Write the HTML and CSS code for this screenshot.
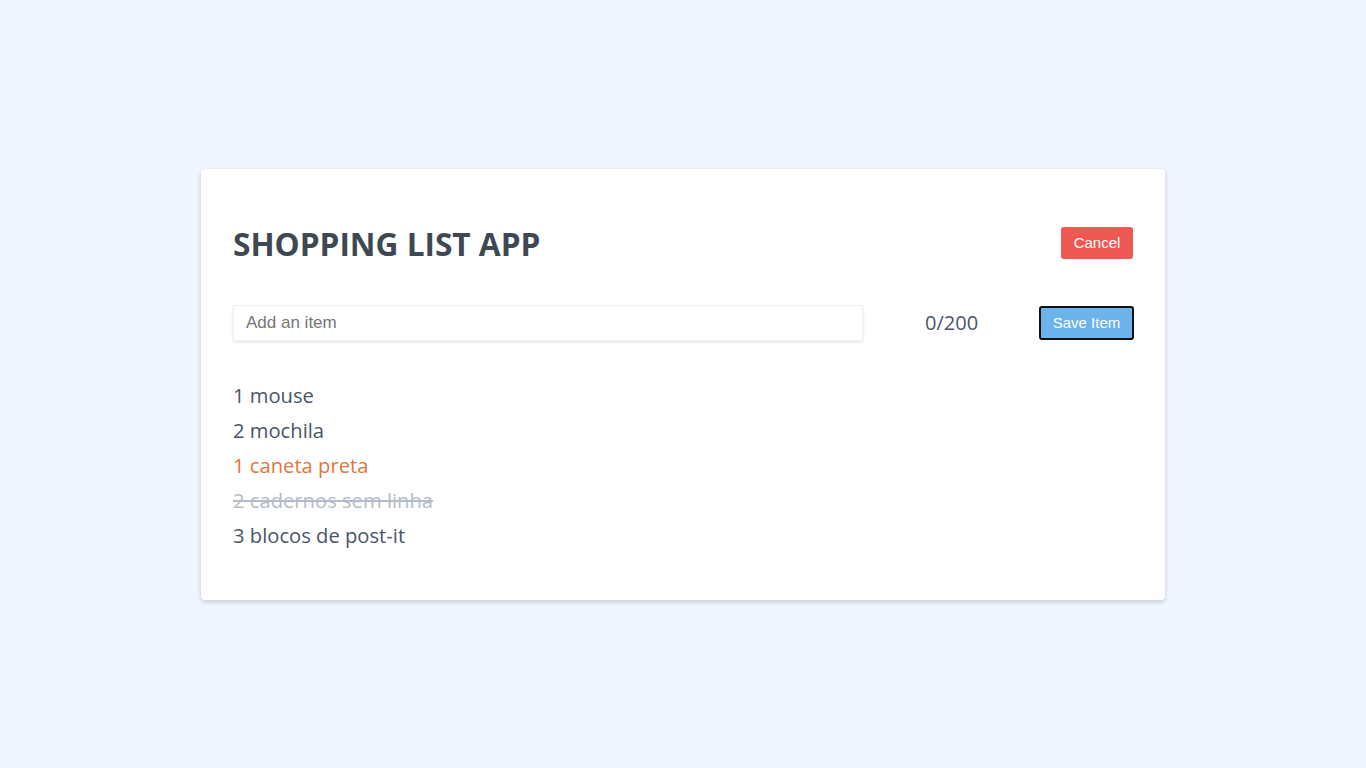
FILE: index.html
```html
<!DOCTYPE html>
<html lang="en">
<head>
<meta charset="utf-8">
<title>Shopping List App</title>
<link rel="stylesheet" href="styles.css">
</head>
<body>
  <main class="card">
    <header class="header">
      <h1 class="title">SHOPPING LIST APP</h1>
      <button class="btn btn-cancel" type="button">Cancel</button>
    </header>
    <form class="add-row">
      <input class="add-input" type="text" placeholder="Add an item">
      <span class="counter">0/200</span>
      <button class="btn btn-save" type="button">Save Item</button>
    </form>
    <ul class="list">
      <li class="item">1 mouse</li>
      <li class="item">2 mochila</li>
      <li class="item item-priority">1 caneta preta</li>
      <li class="item item-done">2 cadernos sem linha</li>
      <li class="item">3 blocos de post-it</li>
    </ul>
  </main>
</body>
</html>
```
FILE: styles.css
```css
* { box-sizing: border-box; }
html, body { margin: 0; padding: 0; }
body {
  min-height: 100vh;
  background: #eff6ff;
  display: flex;
  align-items: center;
  justify-content: center;
  font-family: "Open Sans", "Noto Sans", sans-serif;
  color: #4a5568;
}
.card {
  width: 964px;
  background: #fff;
  border-radius: 4px;
  padding: 32px;
  box-shadow: 0 2px 5px rgba(0, 0, 0, 0.18);
}
.header {
  display: flex;
  align-items: center;
  justify-content: space-between;
  height: 48px;
  margin-top: 19px;
}
.title {
  margin: 0;
  font-size: 31.6px;
  font-weight: 700;
  color: #3d4852;
}
.btn {
  font-family: "Liberation Sans", Arial, sans-serif;
  font-size: 15px;
  color: #fff;
  border: 0;
  border-radius: 3px;
  cursor: pointer;
  padding: 0;
}
.btn-cancel {
  background: #ef5753;
  width: 72px;
  height: 32px;
  margin-bottom: 2px;
}
.add-row {
  display: flex;
  align-items: center;
  margin-top: 37px;
  height: 36px;
}
.add-input {
  width: 630px;
  height: 36px;
  border: 1px solid #f1f1f1;
  border-radius: 2px;
  box-shadow: 0 1px 3px rgba(0, 0, 0, 0.12);
  padding: 0 12px;
  font-family: "Liberation Sans", Arial, sans-serif;
  font-size: 17px;
  color: #333;
  outline: none;
}
.add-input::placeholder { color: #757575; }
.counter {
  margin-left: 62px;
  font-size: 20px;
  color: #4a5568;
}
.btn-save {
  margin-left: auto;
  margin-right: -1px;
  width: 95px;
  height: 34px;
  background: #6cb2eb;
  border: 2px solid #111;
  border-radius: 3px;
}
.list {
  list-style: none;
  margin: 37px 0 15px;
  padding: 0;
}
.item {
  font-size: 20.2px;
  line-height: 35px;
  color: #4a5568;
}
.item-priority { color: #dd7842; }
.item-done {
  color: #b3bcc7;
  text-decoration: line-through;
}
```
